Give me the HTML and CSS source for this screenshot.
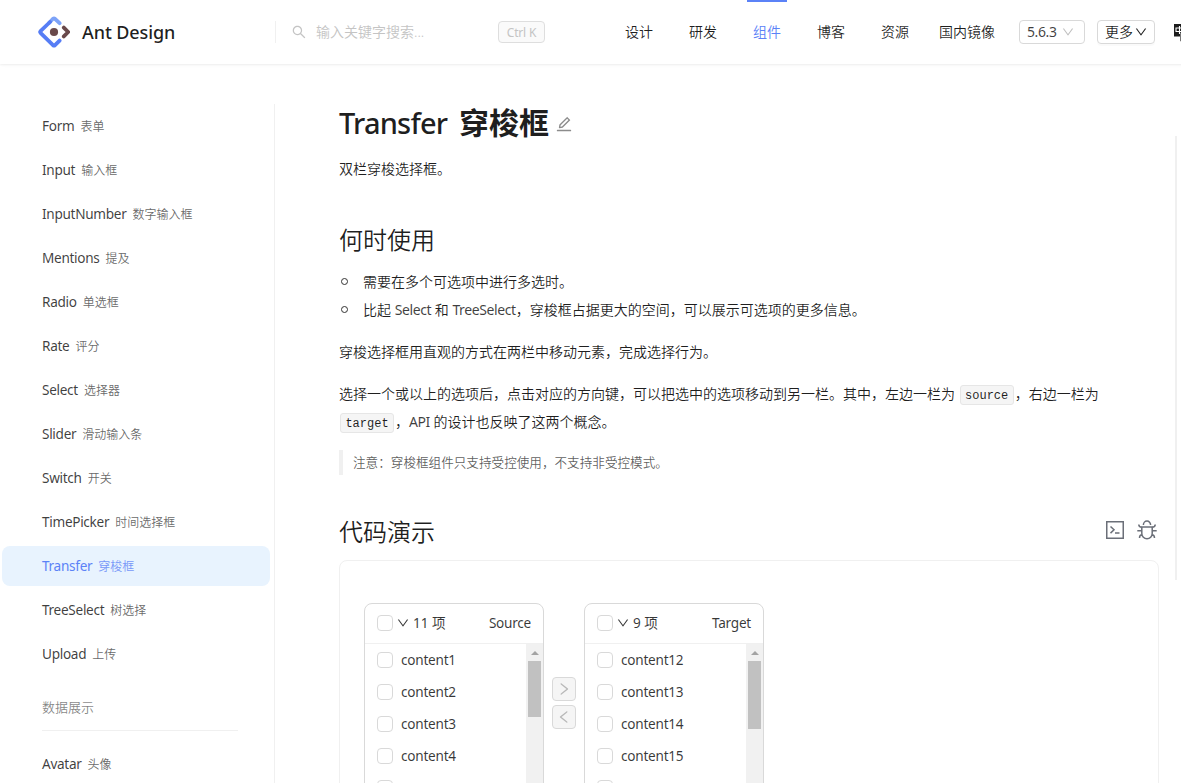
FILE: index.html
```html
<!DOCTYPE html>
<html lang="zh-CN">
<head>
<meta charset="utf-8">
<title>Transfer 穿梭框 - Ant Design</title>
<link rel="stylesheet" href="styles.css">
</head>
<body>
<svg class="defs" width="0" height="0">
  <symbol id="down" viewBox="64 64 896 896"><path d="M884 256h-75c-5.1 0-9.9 2.5-12.9 6.6L512 654.2 227.9 262.6c-3-4.1-7.8-6.6-12.9-6.6h-75c-6.5 0-10.3 7.4-6.5 12.7l352.6 486.1c12.8 17.6 39 17.6 51.7 0l352.6-486.1c3.9-5.3.1-12.7-6.4-12.7z"/></symbol>
  <symbol id="right" viewBox="64 64 896 896"><path d="M765.7 486.8L314.9 134.7A7.97 7.97 0 00302 141v77.3c0 4.9 2.3 9.6 6.1 12.6l360 281.1-360 281.1c-3.9 3-6.1 7.7-6.1 12.6V883c0 6.7 7.7 10.4 12.9 6.3l450.8-352.1a31.96 31.96 0 000-50.4z"/></symbol>
</svg>
<header class="header">
  <a class="logo">
    <svg width="32" height="32" viewBox="0 0 32 32" fill="none" stroke-width="3.8" stroke-linecap="round" stroke-linejoin="round">
      <path stroke="#7da3f8" d="M11 7l4-4.2q1-.8 2 0L21.600 7.200"/>
      <path stroke="#567df5" d="M12 6L2.500 15.200q-.7.8 0 1.600L15 29.200q1 .8 2 0l4.600-4.600"/>
      <path stroke="#69494b" d="M25.800 11.600L30.200 16l-4.400 4.400"/>
      <circle cx="16" cy="16" r="4.100" fill="#69494b"/>
    </svg>
    <span class="brand">Ant Design</span>
  </a>
  <div class="search">
    <svg class="search-icon" viewBox="64 64 896 896"><path d="M909.6 854.5L649.9 594.8C690.2 542.7 712 479 712 412c0-80.2-31.3-155.4-87.9-212.1-56.6-56.7-132-87.9-212.1-87.9s-155.5 31.3-212.1 87.9C143.2 256.5 112 331.8 112 412c0 80.1 31.3 155.5 87.9 212.1C256.5 680.8 331.8 712 412 712c67 0 130.6-21.800 182.700-62l259.700 259.600a8.200 8.200 0 0011.600 0l43.600-43.500a8.200 8.200 0 000-11.600zM570.400 570.400C528 612.700 471.800 636 412 636s-116-23.300-158.400-65.600C211.300 528 188 471.800 188 412s23.300-116.100 65.600-158.400C296 211.300 352.200 188 412 188s116.100 23.200 158.400 65.600S636 352.200 636 412s-23.300 116.100-65.600 158.400z"/></svg>
    <span class="placeholder">输入关键字搜索...</span>
    <kbd class="hotkey">Ctrl K</kbd>
  </div>
  <nav class="nav">
    <a>设计</a><a>研发</a><a class="active">组件</a><a>博客</a><a>资源</a><a>国内镜像</a>
  </nav>
  <div class="pill version"><span>5.6.3</span><svg class="ico12"><use href="#down"/></svg></div>
  <div class="pill more"><span>更多</span><svg class="ico12"><use href="#down"/></svg></div>
  <svg class="lang" width="20" height="20" viewBox="0 0 20 20"><path d="M0 2h12v12.500H0z" fill="#1c1c1c"/><path d="M2 6h7v3.500H2zM5.500 4v8" fill="none" stroke="#fff" stroke-width="1.100"/><path d="M6.500 11h12v8h-12z" fill="#fff" stroke="#777"/></svg>
</header>
<div class="body">
  <aside class="sidebar">
    <a class="item">Form<small>表单</small></a>
    <a class="item">Input<small>输入框</small></a>
    <a class="item">InputNumber<small>数字输入框</small></a>
    <a class="item">Mentions<small>提及</small></a>
    <a class="item">Radio<small>单选框</small></a>
    <a class="item">Rate<small>评分</small></a>
    <a class="item">Select<small>选择器</small></a>
    <a class="item">Slider<small>滑动输入条</small></a>
    <a class="item">Switch<small>开关</small></a>
    <a class="item">TimePicker<small>时间选择框</small></a>
    <a class="item selected">Transfer<small>穿梭框</small></a>
    <a class="item">TreeSelect<small>树选择</small></a>
    <a class="item">Upload<small>上传</small></a>
    <div class="group">数据展示</div>
    <a class="item">Avatar<small>头像</small></a>
  </aside>
  <main class="main">
    <h1><span class="h1-en">Transfer</span><span>穿梭框</span><svg class="edit" viewBox="64 64 896 896"><path d="M257.700 752c2 0 4-.2 6-.5L431.900 722c2-.4 3.900-1.300 5.300-2.800l423.900-423.900a9.960 9.960 0 000-14.100L694.900 114.900c-1.900-1.900-4.400-2.900-7.100-2.900s-5.200 1-7.100 2.900L256.800 538.800c-1.500 1.500-2.400 3.300-2.800 5.300l-29.500 168.200a33.500 33.500 0 009.400 29.800c6.600 6.400 14.900 9.900 23.800 9.900zm67.400-174.400L687.800 215l73.300 73.300-362.700 362.600-88.900 15.700 15.600-89zM880 836H144c-17.700 0-32 14.300-32 32v36c0 4.400 3.600 8 8 8h784c4.400 0 8-3.600 8-8v-36c0-17.700-14.300-32-32-32z"/></svg></h1>
    <p class="intro">双栏穿梭选择框。</p>
    <h2>何时使用</h2>
    <ul>
      <li>需要在多个可选项中进行多选时。</li>
      <li>比起 <span class="en">Select</span> 和 <span class="en">TreeSelect</span>，穿梭框占据更大的空间，可以展示可选项的更多信息。</li>
    </ul>
    <p>穿梭选择框用直观的方式在两栏中移动元素，完成选择行为。</p>
    <p>选择一个或以上的选项后，点击对应的方向键，可以把选中的选项移动到另一栏。其中，左边一栏为 <code>source</code>，右边一栏为<br><code>target</code>，<span class="en">API</span> 的设计也反映了这两个概念。</p>
    <blockquote>注意：穿梭框组件只支持受控使用，不支持非受控模式。</blockquote>
    <div class="demo-title">
      <h2>代码演示</h2>
      <div class="tools">
        <svg width="20" height="20" viewBox="0 0 20 20" fill="none" stroke="#6b6f78" stroke-width="1.500"><path d="M1.750 1.750h16.500v16.500H1.750z"/><path d="M5.500 6.500L9 9.800l-3.500 3.300M10 12.900h4.500"/></svg>
        <svg width="20" height="20" viewBox="0 0 20 20" fill="none" stroke="#6b6f78" stroke-width="1.500"><path d="M4.800 7h10.400v6.500a5.200 5.200 0 01-10.400 0zM6.400 5a3.600 4 0 017.200 0M.3 10.800h4.500M15.200 10.800h4.500M1.800 4.500c0 2 1 2.700 3 2.700M18.200 4.500c0 2-1 2.700-3 2.700M2.500 18c0-2.500 1-3.300 2.700-3.500M17.500 18c0-2.500-1-3.300-2.700-3.500"/></svg>
      </div>
    </div>
    <section class="card">
      <div class="transfer">
        <div class="list">
          <div class="list-head"><i class="box"></i><svg class="ico12"><use href="#down"/></svg><span>11 项</span><b>Source</b></div>
          <div class="list-body">
            <div class="rows">
              <div><i class="box"></i>content1</div><div><i class="box"></i>content2</div><div><i class="box"></i>content3</div><div><i class="box"></i>content4</div><div><i class="box"></i></div>
            </div>
            <div class="bar"><i class="arrow"></i><i class="thumb"></i></div>
          </div>
        </div>
        <div class="ops">
          <button><svg class="ico14"><use href="#right"/></svg></button>
          <button><svg class="ico14 flip"><use href="#right"/></svg></button>
        </div>
        <div class="list">
          <div class="list-head"><i class="box"></i><svg class="ico12"><use href="#down"/></svg><span>9 项</span><b>Target</b></div>
          <div class="list-body">
            <div class="rows">
              <div><i class="box"></i>content12</div><div><i class="box"></i>content13</div><div><i class="box"></i>content14</div><div><i class="box"></i>content15</div><div><i class="box"></i></div>
            </div>
            <div class="bar"><i class="arrow"></i><i class="thumb tall"></i></div>
          </div>
        </div>
      </div>
    </section>
  </main>
  <div class="anchor-rail"></div>
</div>
</body>
</html>
```
FILE: styles.css
```css
*, *::before { box-sizing: border-box; }
html, body { height: 100%; }
body {
  margin: 0;
  height: 783px;
  overflow: hidden;
  display: flex;
  flex-direction: column;
  background: #fff;
  color: rgba(0, 0, 0, 0.88);
  font: 14px/28px "Noto Sans", "Noto Sans CJK SC", sans-serif;
  font-weight: 350;
  text-spacing-trim: space-all;
}
svg { fill: currentColor; flex: none; }
.defs { position: absolute; }
.ico12 { width: 12px; height: 12px; }
.ico14 { width: 14px; height: 14px; }
.flip { transform: scaleX(-1); }

.header {
  flex: none;
  height: 64px;
  width: 1220px;
  display: flex;
  align-items: center;
  box-shadow: 0 1px 2px rgba(0, 0, 0, 0.06), 0 1px 6px -1px rgba(0, 0, 0, 0.03);
  padding-left: 38px;
}
.logo { display: flex; align-items: center; gap: 12px; width: 237px; }
.logo svg { fill: none; }
.brand { font-size: 18px; font-weight: 500; letter-spacing: -0.1px; }
.search {
  display: flex;
  align-items: center;
  width: 270px;
  height: 22px;
  border-left: 1px solid #f0f0f0;
  padding-left: 16px;
  color: #c4c4c4;
}
.search-icon { width: 14px; height: 14px; margin-right: 10px; }
.placeholder { flex: 1; }
.hotkey {
  width: 47px;
  height: 22px;
  border: 1px solid #dedede;
  border-radius: 4px;
  background: #fafafa;
  font: 12px/21px "Noto Sans", sans-serif;
  letter-spacing: -0.2px;
  text-align: center;
}
.nav { display: flex; gap: 24px; margin-left: 74px; margin-right: 24px; }
.nav a { min-width: 40px; height: 64px; line-height: 64px; text-align: center; }
.nav .active { color: #5b82f7; border-top: 2px solid #5b82f7; line-height: 60px; }
.pill {
  height: 24px;
  border: 1px solid #d9d9d9;
  border-radius: 4px;
  display: flex;
  align-items: center;
  padding-left: 7px;
  line-height: 22px;
  margin-right: 12px;
}
.version { width: 66px; gap: 6px; }
.version svg { color: #bfbfbf; }
.version span { width: 29px; letter-spacing: -0.4px; font-weight: 400; color: rgba(0, 0, 0, 0.75); }
.more { width: 58px; gap: 2px; margin-right: 19px; box-shadow: 0 2px 0 rgba(0, 0, 0, 0.02); }

.body { flex: 1; min-height: 0; display: flex; padding-top: 40px; }
.sidebar { width: 275px; flex: none; border-right: 1px solid #f0f0f0; padding: 2px 4px 0 2px; }
.item {
  display: flex;
  align-items: center;
  gap: 6px;
  height: 40px;
  margin-bottom: 4px;
  padding: 0 0 0 40px;
  border-radius: 8px;
  font-size: 13.6px;
  font-weight: 400;
  letter-spacing: -0.3px;
  color: rgba(0, 0, 0, 0.76);
}
.item small { font-size: 12px; font-weight: 350; opacity: 0.8; letter-spacing: 0; padding-top: 2px; }
.selected { background: #e8f3fe; color: #5b82f7; }
.group {
  margin: 19px 32px 13px 40px;
  padding-bottom: 9px;
  border-bottom: 1px solid #f0f0f0;
  font-size: 13px;
  color: rgba(0, 0, 0, 0.5);
}

.main { width: 820px; margin-left: 64px; flex: none; }
h1 { display: flex; align-items: center; margin: 0 0 13px; font-size: 30px; line-height: 38px; font-weight: 700; }
.h1-en { font-size: 29px; font-weight: 500; width: 120px; letter-spacing: -0.8px; }
.edit { width: 16px; height: 16px; margin: 2px 0 0 7px; color: #8c8c8c; }
h2 { margin: 0; font-size: 24px; line-height: 32px; font-weight: 350; }
p { margin: 14px 0; white-space: nowrap; }
.intro { margin: 0 0 41px; }
ul { margin: 12px 0 14px; padding: 0; list-style: none; }
li { display: block; white-space: nowrap; }
li::before {
  content: "";
  display: inline-block;
  width: 7px;
  height: 7px;
  margin: 0 15px 2px 2px;
  border: 1.500px solid #333;
  border-radius: 50%;
}
.en { font-weight: 400; letter-spacing: -0.4px; color: rgba(0, 0, 0, 0.75); }
code {
  display: inline-block;
  width: 54px;
  height: 20px;
  margin: 0 1px;
  border: 1px solid #e6e6e6;
  border-radius: 3px;
  background: #f5f5f5;
  font: 12px/21px "Liberation Mono", monospace;
  text-align: center;
}
blockquote {
  margin: 14px 0 41px;
  padding-left: 10px;
  border-left: 4px solid #f0f0f0;
  font-size: 12.6px;
  line-height: 25px;
  color: rgba(0, 0, 0, 0.65);
}
.demo-title { display: flex; justify-content: space-between; }
.tools { display: flex; gap: 12px; margin: 4px 2px 0 0; }
.tools svg { fill: none; }
.card { margin-top: 12px; height: 400px; border: 1px solid #f0f0f0; border-radius: 8px; padding: 42px 24px; }
.transfer { display: flex; font-size: 13.6px; font-weight: 400; letter-spacing: -0.25px; color: rgba(0, 0, 0, 0.78); }
.list { width: 180px; height: 300px; border: 1px solid #d9d9d9; border-radius: 8px; }
.list-head { height: 40px; display: flex; align-items: center; border-bottom: 1px solid #f0f0f0; padding: 0 12px 1px; }
.list-head svg { margin: 0 4px; }
.list-head span { letter-spacing: 0; }
.list-head b { margin-left: auto; font-weight: inherit; }
.box { width: 16px; height: 16px; border: 1px solid #d9d9d9; border-radius: 4px; flex: none; }
.list-body { display: flex; height: 258px; }
.rows { flex: 1; padding-left: 12px; }
.rows div { display: flex; align-items: center; gap: 8px; height: 32px; }
.bar { width: 17px; background: #f1f1f1; display: flex; flex-direction: column; align-items: center; }
.arrow { height: 4px; margin: 7px 0 6px; border: 4px solid transparent; border-top: 0; border-bottom-color: #a3a3a3; }
.thumb { width: 13px; height: 56px; background: #c1c1c1; }
.tall { height: 68px; }
.ops { display: flex; flex-direction: column; gap: 4px; margin: 74px 8px 0; }
button {
  width: 24px;
  height: 24px;
  padding: 0;
  border: 1px solid #d9d9d9;
  border-radius: 4px;
  background: #f5f5f5;
  color: #b8b8b8;
  display: flex;
  align-items: center;
  justify-content: center;
}
.anchor-rail { width: 2px; height: 444px; margin: 32px 0 0 16px; background: #f0f0f0; flex: none; }
```
